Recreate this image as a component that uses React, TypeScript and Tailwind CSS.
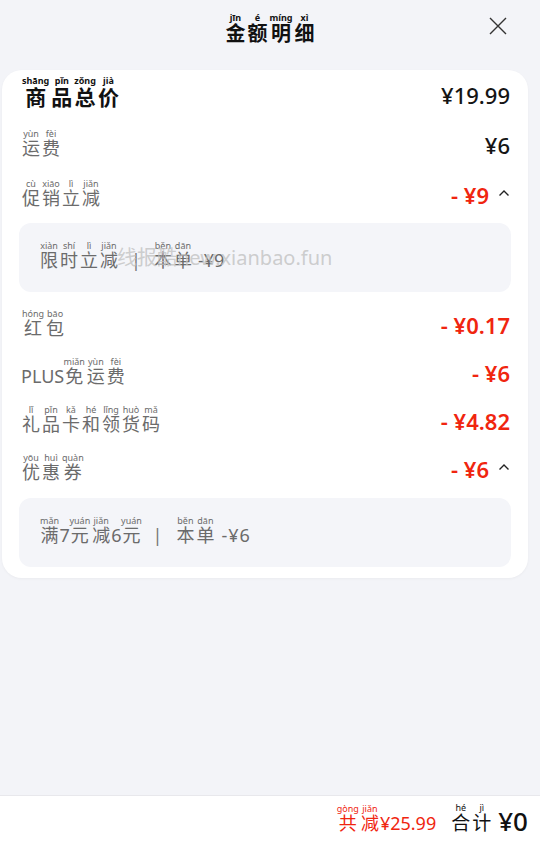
import React from "react";

type Seg = string | [string, string] | React.ReactElement;

function Py({ segs, className = "" }: { segs: Seg[]; className?: string }) {
  return (
    <span className={"[&_rt]:text-[9px] [&_rt]:leading-[10px] " + className}>
      {segs.map((s, i) =>
        typeof s === "string" ? (
          <span key={i}>{s}</span>
        ) : Array.isArray(s) ? (
          <ruby key={i} className="mx-[1px]">
            {s[0]}
            <rt>{s[1]}</rt>
          </ruby>
        ) : (
          <React.Fragment key={i}>{s}</React.Fragment>
        )
      )}
    </span>
  );
}

function Chevron() {
  return (
    <svg width="12" height="8" viewBox="0 0 12 8" className="ml-[9px] mb-[4px]">
      <path d="M1.5 6.5 L6 2 L10.5 6.5" fill="none" stroke="#222" strokeWidth="1.4" />
    </svg>
  );
}

function Row({
  label,
  value,
  red = false,
  chevron = false,
  bold = false,
  h = "h-[50px]",
}: {
  label: React.ReactNode;
  value: string;
  red?: boolean;
  chevron?: boolean;
  bold?: boolean;
  h?: string;
}) {
  return (
    <div className={"flex items-center justify-between pl-[19px] pr-[18px] " + h}>
      <div className={bold ? "text-[21px] font-bold text-[#111]" : "text-[18px] text-[#6b6b6b]"}>{label}</div>
      <div className="flex items-center">
        <span
          className={
            "text-[22px] leading-none " + (red ? "font-semibold text-[#f0250f]" : "font-medium text-[#151515]")
          }
        >
          {value}
        </span>
        {chevron && <Chevron />}
      </div>
    </div>
  );
}

const Sep = <span className="mx-[12px] text-[#777]">|</span>;

export default function App() {
  return (
    <div
      className="flex min-h-[844px] w-[540px] flex-col bg-[#f3f4f8]"
      style={{ fontFamily: '"Noto Sans", "Noto Sans CJK SC", sans-serif' }}
    >
      <div className="relative flex h-[52px] items-center justify-center pt-[9px]">
        <Py
          segs={[["金", "jīn"], ["额", "é"], ["明", "míng"], ["细", "xì"]]}
          className="text-[20px] font-bold text-[#111]"
        />
        <svg width="18" height="18" viewBox="0 0 18 18" className="absolute right-[33px] top-[17px]">
          <path d="M1 1 L17 17 M17 1 L1 17" stroke="#333" strokeWidth="1.4" />
        </svg>
      </div>

      <div className="mx-[2px] mt-[18px] w-[526px] rounded-[20px] bg-white pb-[11px] shadow-[0_1px_3px_rgba(0,0,0,0.04)]">
        <Row bold label={<Py segs={[["商", "shāng"], ["品", "pǐn"], ["总", "zǒng"], ["价", "jià"]]} />} value="¥19.99" />
        <Row label={<Py segs={[["运", "yùn"], ["费", "fèi"]]} />} value="¥6" />
        <Row red chevron label={<Py segs={[["促", "cù"], ["销", "xiāo"], ["立", "lì"], ["减", "jiǎn"]]} />} value="- ¥9" />
        <div className="relative mx-[17px] mt-[3px] flex h-[69px] items-center rounded-[12px] bg-[#f4f5f9] pl-[20px] text-[18px] text-[#6b6b6b]">
          <Py
            segs={[["限", "xiàn"], ["时", "shí"], ["立", "lì"], ["减", "jiǎn"], Sep, ["本", "běn"], ["单", "dān"], <span key="v" className="ml-[5px]">-¥9</span>]}
          />
          <span className="pointer-events-none absolute left-[98px] top-[25px] text-[20px] leading-none text-[#c2c2c2]/80">
            线报酷new.xianbao.fun
          </span>
        </div>
        <div className="h-[9px]" />
        <Row h="h-[48px]" red label={<Py segs={[["红", "hóng"], ["包", "bāo"]]} />} value="- ¥0.17" />
        <Row h="h-[48px]" red label={<Py segs={["PLUS", ["免", "miǎn"], ["运", "yùn"], ["费", "fèi"]]} />} value="- ¥6" />
        <Row
          h="h-[48px]"
          red
          label={<Py segs={[["礼", "lǐ"], ["品", "pǐn"], ["卡", "kǎ"], ["和", "hé"], ["领", "lǐng"], ["货", "huò"], ["码", "mǎ"]]} />}
          value="- ¥4.82"
        />
        <Row h="h-[48px]" red chevron label={<Py segs={[["优", "yōu"], ["惠", "huì"], ["券", "quàn"]]} />} value="- ¥6" />
        <div className="mx-[17px] mt-[5px] flex h-[69px] items-center rounded-[12px] bg-[#f4f5f9] pl-[20px] text-[18px] text-[#6b6b6b]">
          <Py
            segs={[["满", "mǎn"], "7", ["元", "yuán"], ["减", "jiǎn"], "6", ["元", "yuán"], <span key="s" className="ml-[11px] mr-[13px] text-[#777]">|</span>, ["本", "běn"], ["单", "dān"], <span key="v" className="ml-[6px] tracking-[1px]">-¥6</span>]}
          />
        </div>
      </div>

      <div className="flex-1" />

      <div className="flex h-[49px] items-center justify-end border-t border-[#e8e8ec] bg-white pr-[12px]">
        <Py segs={[["共", "gòng"], ["减", "jiǎn"], "¥25.99"]} className="text-[18px] text-[#f0250f]" />
        <div className="ml-[14px] flex items-end">
          <Py segs={[["合", "hé"], ["计", "jì"]]} className="text-[19px] text-[#111]" />
          <span className="ml-[6px] text-[26px] font-medium leading-[32px] text-[#111]">¥0</span>
        </div>
      </div>
    </div>
  );
}
